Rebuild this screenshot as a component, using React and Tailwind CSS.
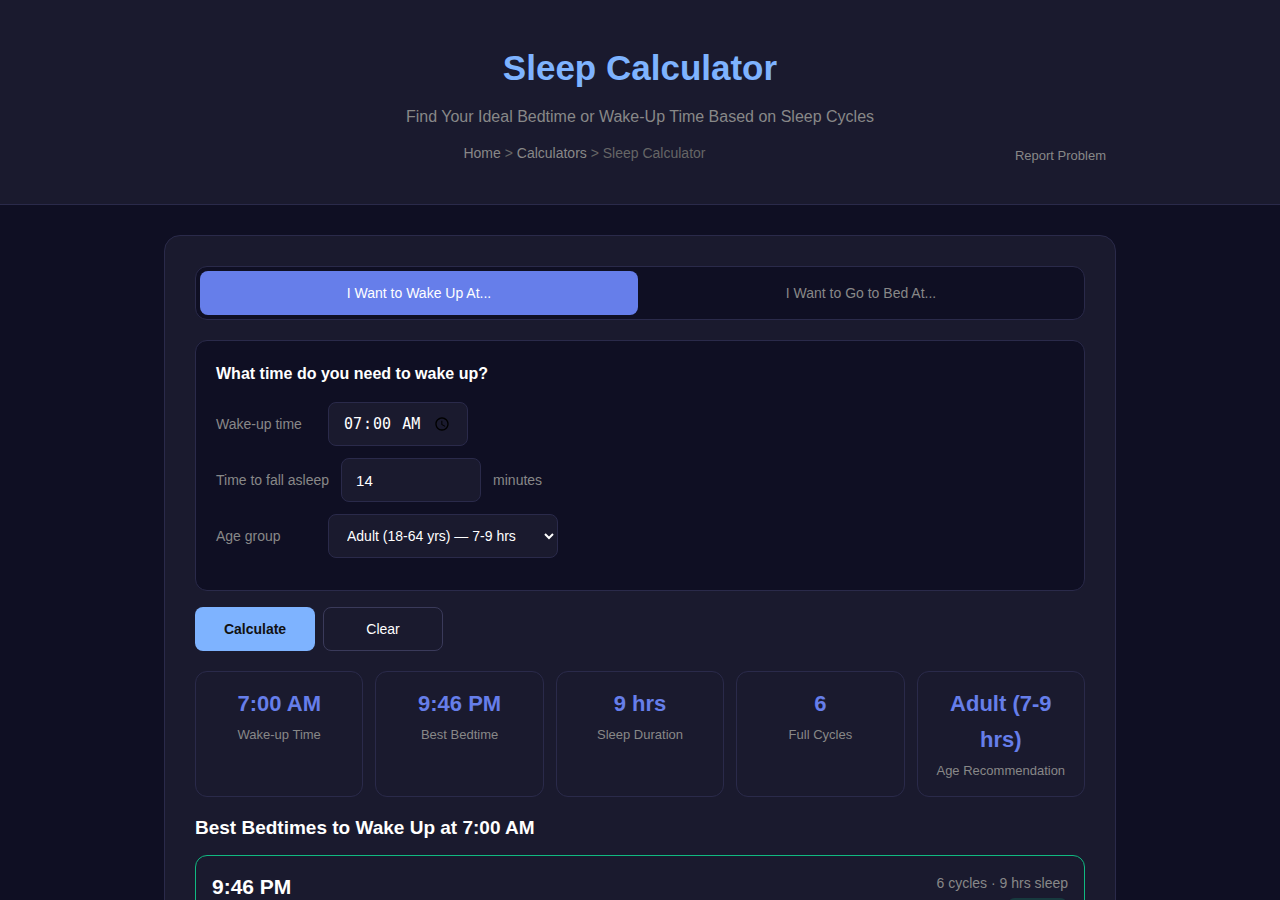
import React, { useState } from 'react';

const AGE_GROUPS = [
    { id: 'teen', label: 'Teen (14-17 yrs) — 8-10 hrs' },
    { id: 'adult', label: 'Adult (18-64 yrs) — 7-9 hrs' },
    { id: 'senior', label: 'Older (65+ yrs) — 7-8 hrs' },
];

const STATS = [
    { value: '7:00 AM', label: 'Wake-up Time' },
    { value: '9:46 PM', label: 'Best Bedtime' },
    { value: '9 hrs', label: 'Sleep Duration' },
    { value: '6', label: 'Full Cycles' },
    { value: 'Adult (7-9 hrs)', label: 'Age Recommendation' },
];

const Header = () => (
    <header className="border-b border-[#2a2a4a] bg-[#1a1a2e] pt-10 pb-[38px]">
        <div className="mx-auto max-w-[1000px] px-6 text-center">
            <h1 className="text-[35px] leading-14 font-bold text-[#7eb3ff]">Sleep Calculator</h1>
            <p className="mt-2 text-base leading-[26px] text-[#888]">
                Find Your Ideal Bedtime or Wake-Up Time Based on Sleep Cycles
            </p>
            <div className="mt-2.5 flex items-center">
                <nav aria-label="Breadcrumb" className="flex-1 text-sm leading-6 text-[#666]">
                    <a href="#home" className="text-[#888]">Home</a> &gt;{' '}
                    <a href="#calculators" className="text-[#888]">Calculators</a> &gt; Sleep Calculator
                </nav>
                <a href="#report" className="px-2.5 pt-1.5 text-[13px] leading-5 text-[#888]">Report Problem</a>
            </div>
        </div>
    </header>
);

const ModeTabs = ({ mode, onChange }) => (
    <div className="flex gap-1 rounded-xl border border-[#2a2a4a] bg-[#0f0f23] p-1">
        <button
            type="button"
            onClick={() => onChange('wake')}
            className={`h-11 flex-1 rounded-lg text-sm ${mode === 'wake' ? 'bg-[#667eea] text-white' : 'text-[#888]'}`}
        >
            I Want to Wake Up At...
        </button>
        <button
            type="button"
            onClick={() => onChange('bed')}
            className={`h-11 flex-1 rounded-lg text-sm ${mode === 'bed' ? 'bg-[#667eea] text-white' : 'text-[#888]'}`}
        >
            I Want to Go to Bed At...
        </button>
    </div>
);

const Field = ({ id, label, suffix, children }) => (
    <div className="mb-3 flex items-center gap-3">
        <label htmlFor={id} className="min-w-[100px] text-sm text-[#888]">{label}</label>
        {children}
        {suffix && <span className="text-sm text-[#888]">{suffix}</span>}
    </div>
);

const StatCard = ({ value, label }) => (
    <div className="rounded-xl border border-[#2a2a4a] px-4 pt-3.5 pb-4 text-center">
        <div className="text-[22px] leading-9 font-bold text-[#667eea]">{value}</div>
        <div className="mt-1 text-[13px] leading-[18px] text-[#888]">{label}</div>
    </div>
);

export default function App() {
    const [mode, setMode] = useState('wake');
    const [time, setTime] = useState('07:00');
    const [latency, setLatency] = useState('14');
    const [age, setAge] = useState('adult');

    return (
        <div className="min-h-screen bg-[#0f0f23] font-['Liberation_Sans',Arial,sans-serif] text-white">
            <Header />
            <main className="mx-auto max-w-[1000px] px-6 py-[30px]">
                <div className="rounded-2xl border border-[#2a2a4a] bg-[#1a1a2e] p-[30px]">
                    <ModeTabs mode={mode} onChange={setMode} />

                    <section className="mt-5 rounded-xl border border-[#2a2a4a] bg-[#0f0f23] p-5">
                        <h2 className="mb-[15px] text-base leading-[26px] font-bold">What time do you need to wake up?</h2>
                        <Field id="wake-time" label="Wake-up time">
                            <input
                                id="wake-time"
                                type="time"
                                value={time}
                                onChange={(e) => setTime(e.target.value)}
                                className="h-11 w-[140px] rounded-lg border border-[#2a2a4a] bg-[#1a1a2e] px-3.5 font-['DejaVu_Sans_Mono',monospace] text-[15px]"
                            />
                        </Field>
                        <Field id="latency" label="Time to fall asleep" suffix="minutes">
                            <input
                                id="latency"
                                type="number"
                                value={latency}
                                onChange={(e) => setLatency(e.target.value)}
                                className="h-11 w-[140px] rounded-lg border border-[#2a2a4a] bg-[#1a1a2e] px-3.5 text-[15px]"
                            />
                        </Field>
                        <Field id="age" label="Age group">
                            <select
                                id="age"
                                value={age}
                                onChange={(e) => setAge(e.target.value)}
                                className="h-11 w-[230px] rounded-lg border border-[#2a2a4a] bg-[#1a1a2e] px-3.5 text-sm"
                            >
                                {AGE_GROUPS.map((g) => (
                                    <option key={g.id} value={g.id}>{g.label}</option>
                                ))}
                            </select>
                        </Field>
                    </section>

                    <div className="mt-4 flex gap-2">
                        <button type="button" className="h-11 w-[120px] rounded-lg bg-[#7eb3ff] text-sm font-bold text-[#111]">
                            Calculate
                        </button>
                        <button type="button" className="h-11 w-[120px] rounded-lg border border-[#3a3a5a] text-sm">
                            Clear
                        </button>
                    </div>

                    <div className="mt-5 grid grid-cols-5 gap-3">
                        {STATS.map((s) => (
                            <StatCard key={s.label} value={s.value} label={s.label} />
                        ))}
                    </div>

                    <h2 className="mt-4 text-[19px] leading-[30px] font-bold">Best Bedtimes to Wake Up at 7:00 AM</h2>

                    {/* Top recommendation */}
                    <div className="mt-3 flex justify-between rounded-xl border border-[#10b981] p-4">
                        <div className="text-[21px] leading-[30px] font-bold">9:46 PM</div>
                        <div className="flex flex-col items-end gap-1">
                            <div className="text-sm leading-[22px] text-[#888]">6 cycles · 9 hrs sleep</div>
                            <span className="rounded-lg bg-[#10b981]/20 px-2.5 py-1 text-xs leading-5 text-[#10b981]">Optimal</span>
                        </div>
                    </div>
                </div>
            </main>
        </div>
    );
}
